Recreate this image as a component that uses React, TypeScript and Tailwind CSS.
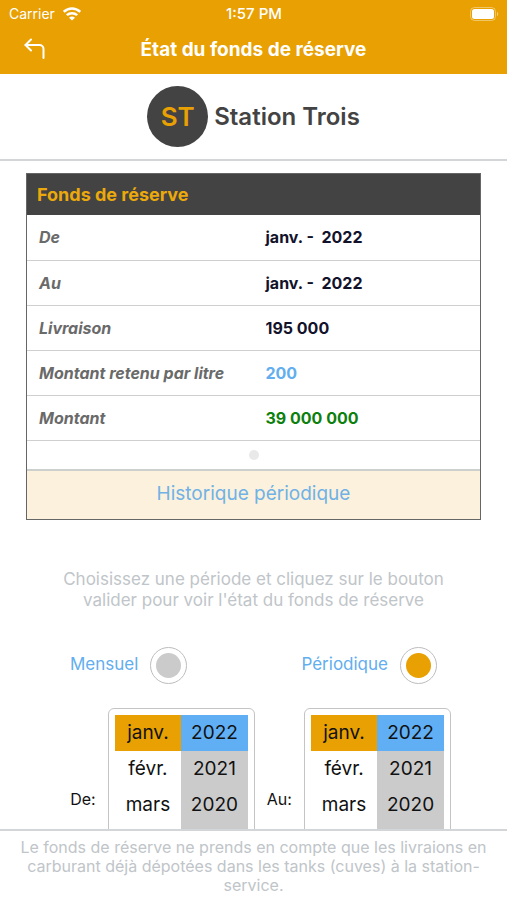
import { useState } from 'react';

const ROWS = [
  { label: 'De', value: 'janv. -  2022', color: 'text-[#12122b]' },
  { label: 'Au', value: 'janv. -  2022', color: 'text-[#12122b]' },
  { label: 'Livraison', value: '195 000', color: 'text-[#12122b]' },
  { label: 'Montant retenu par litre', value: '200', color: 'text-[#62aeee]' },
  { label: 'Montant', value: '39 000 000', color: 'text-[#0d800d]' },
];

const MONTHS = ['janv.', 'févr.', 'mars'];
const YEARS = ['2022', '2021', '2020'];

const StatusBar = () => (
  <div className="grid grid-cols-3 items-center h-7 pl-[9px] pr-2 text-sm">
    <div className="flex items-center gap-2">
      <span>Carrier</span>
      <svg width="18" height="14" viewBox="0 0 18 14" fill="none" stroke="currentColor" strokeWidth="2.5" aria-hidden="true">
        <path d="M0.8 4.8C5.6.4 12.4.4 17.2 4.8" />
        <path d="M3.8 8.2c2.9-2.7 7.5-2.7 10.4 0" />
        <path d="M9 13.6 6 10.7c1.7-1.5 4.3-1.5 6 0z" fill="currentColor" stroke="none" />
      </svg>
    </div>
    <span className="text-center text-[15px] font-medium">1:57 PM</span>
    <svg className="justify-self-end" width="29" height="14" viewBox="0 0 29 14" aria-hidden="true">
      <rect x="0.5" y="0.5" width="25" height="13" rx="4" fill="none" stroke="#fff" strokeOpacity="0.4" />
      <rect x="2" y="2" width="22" height="10" rx="2.5" fill="#fff" />
      <path d="M27 4.8c1.6.8 1.6 3.6 0 4.4z" fill="#fff" fillOpacity="0.5" />
    </svg>
  </div>
);

type ModeProps = { label: string; checked: boolean; onSelect: () => void };

const ModeOption = ({ label, checked, onSelect }: ModeProps) => (
  <label className="flex items-center gap-3 text-[17px] text-[#62aeee] cursor-pointer">
    {label}
    <input
      type="radio"
      name="mode"
      checked={checked}
      onChange={onSelect}
      className="appearance-none size-[37px] rounded-full border border-[#bdbdbd] bg-[#cbcbcb] bg-clip-content p-[5px] checked:bg-[#e8a003]"
    />
  </label>
);

type ColumnProps = {
  label: string;
  items: string[];
  value: string;
  onChange: (item: string) => void;
  base: string;
  active: string;
};

const PickerColumn = ({ label, items, value, onChange, base, active }: ColumnProps) => (
  <div role="group" aria-label={label} className={`flex-1 flex flex-col ${base}`}>
    {items.map((item) => (
      <button
        key={item}
        type="button"
        aria-pressed={item === value}
        onClick={() => onChange(item)}
        className={`h-9 pt-0.5 shrink-0 text-[19px] text-[#111] ${item === value ? active : ''}`}
      >
        {item}
      </button>
    ))}
  </div>
);

const PeriodPicker = ({ label }: { label: string }) => {
  const [month, setMonth] = useState('janv.');
  const [year, setYear] = useState('2022');

  return (
    <div role="group" aria-label={label} className="flex items-center gap-3">
      <span className="text-base text-[#111]">{label}</span>
      <div className="w-[147px] h-[182px] p-1.5 rounded-md border border-[#c4c4c4]">
        <div className="flex h-full overflow-hidden">
          <PickerColumn label="Mois" items={MONTHS} value={month} onChange={setMonth} base="bg-white" active="bg-[#e8a003]" />
          <PickerColumn label="Année" items={YEARS} value={year} onChange={setYear} base="bg-[#cbcbcb]" active="bg-[#60aff5]" />
        </div>
      </div>
    </div>
  );
};

export default function App() {
  const [mode, setMode] = useState('periodique');

  return (
    <div className="flex flex-col h-screen bg-white font-['Inter',sans-serif]">
      <header className="shrink-0 bg-[#e8a003] text-white">
        <StatusBar />
        <div className="grid grid-cols-[48px_1fr_48px] items-start h-[46px] pt-2">
          <button type="button" aria-label="Retour" className="justify-self-end">
            <svg width="24" height="24" viewBox="0 0 24 24" fill="none" stroke="currentColor" strokeWidth="2" strokeLinecap="round" strokeLinejoin="round">
              <path d="M7 3.5 1.5 9 7 14.5" />
              <path d="M1.5 9h14a4 4 0 0 1 4 4v9" />
            </svg>
          </button>
          <h1 className="text-center text-[19px] leading-7 font-bold">État du fonds de réserve</h1>
        </div>
      </header>

      {/* STATION */}
      <div className="shrink-0 flex items-center justify-center gap-1.5 h-[87px] border-b-2 border-[#d3d6d8]">
        <span className="flex items-center justify-center size-[61px] rounded-full bg-[#434343] text-[26px] font-semibold text-[#e8a003]">ST</span>
        <h2 className="text-2xl font-semibold text-[#434343]">Station Trois</h2>
      </div>

      <main className="flex-1 min-h-0 overflow-y-auto [scrollbar-width:none]">
        <section className="mt-3 mx-[26px] border border-[#666]">
          <table className="w-full table-fixed border-collapse text-left">
            <thead>
              <tr>
                <th colSpan={2} className="h-[41px] pl-2.5 bg-[#434343] text-lg font-bold text-[#eba90c]">Fonds de réserve</th>
              </tr>
            </thead>
            <tbody>
              {ROWS.map((row) => (
                <tr key={row.label} className="h-[45px] border-b border-[#cfcfcf]">
                  <th scope="row" className="pl-3 text-base font-bold italic text-[#6a6a6a]">{row.label}</th>
                  <td className={`pl-3 text-base font-bold whitespace-pre ${row.color}`}>{row.value}</td>
                </tr>
              ))}
            </tbody>
          </table>
          <div className="flex items-center justify-center h-7">
            <span className="size-2.5 rounded-full bg-[#e9e9e9]" />
          </div>
          <button type="button" className="w-full h-[50px] border-t-2 border-[#ccd0cc] bg-[#fcf1dc] text-[19px] text-[#70b2e6]">
            Historique périodique
          </button>
        </section>

        <p className="mt-[49px] mx-auto max-w-[400px] text-center text-[17px] leading-[21px] text-[#c0c5c9]">
          Choisissez une période et cliquez sur le bouton valider pour voir l'état du fonds de réserve
        </p>

        <div className="flex justify-between mt-9 px-[70px]">
          <ModeOption label="Mensuel" checked={mode === 'mensuel'} onSelect={() => setMode('mensuel')} />
          <ModeOption label="Périodique" checked={mode === 'periodique'} onSelect={() => setMode('periodique')} />
        </div>

        <div className="flex justify-center gap-3 mt-6 pl-3.5">
          <PeriodPicker label="De:" />
          <PeriodPicker label="Au:" />
        </div>
      </main>

      <footer className="shrink-0 border-t-2 border-[#d3d6d8] px-5 pt-[7px] pb-[5px] text-center text-base leading-[19px] text-[#c0c5c9]">
        Le fonds de réserve ne prends en compte que les livraions en carburant déjà dépotées dans les tanks (cuves) à la station-service.
      </footer>
    </div>
  );
}
